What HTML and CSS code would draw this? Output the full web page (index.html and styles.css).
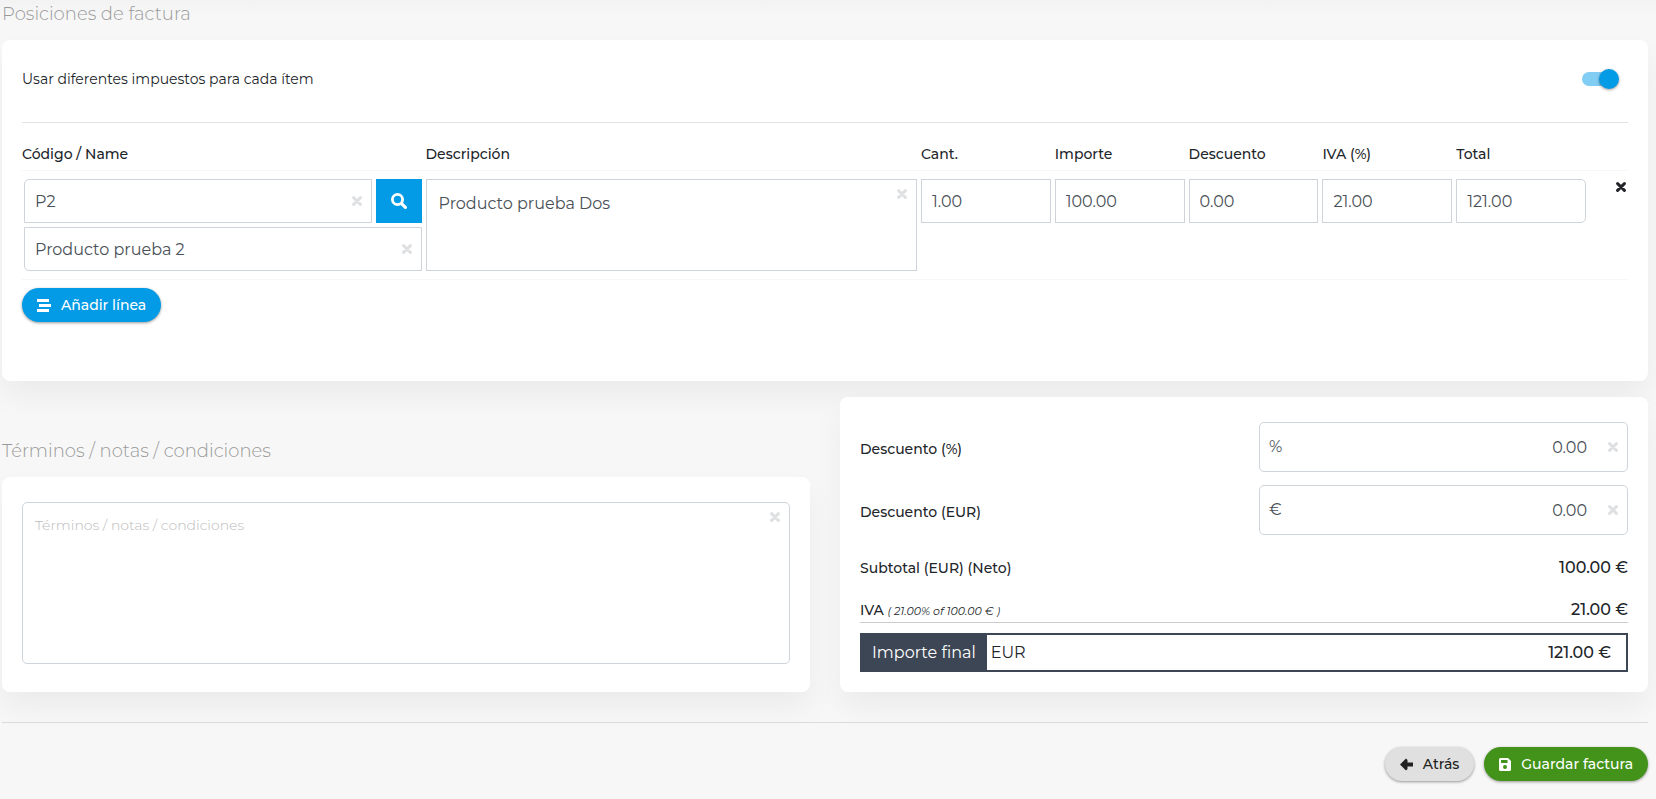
FILE: index.html
```html
<!DOCTYPE html>
<html lang="es">
<head>
<meta charset="utf-8">
<meta name="viewport" content="width=device-width, initial-scale=1">
<title>Posiciones de factura</title>
<link rel="stylesheet" href="styles.css">
</head>
<body>
<svg class="sprite" aria-hidden="true">
  <symbol id="times" viewBox="0 0 10 10"><path d="M1.600 1.600 8.400 8.400M8.400 1.600 1.600 8.400" stroke="currentColor" stroke-width="3" stroke-linecap="round"/></symbol>
</svg>
<main class="page">
  <section>
    <h2 class="section-title">Posiciones de factura</h2>
    <div class="card items-card">
      <div class="tax-row">
        <label for="taxes">Usar diferentes impuestos para cada ítem</label>
        <input class="switch" type="checkbox" role="switch" id="taxes" checked>
      </div>
      <table class="items">
        <colgroup>
          <col class="col-code"><col><col class="col-num"><col class="col-num"><col class="col-num"><col class="col-num"><col class="col-num"><col class="col-remove">
        </colgroup>
        <thead>
          <tr>
            <th scope="col">Código / Name</th><th scope="col">Descripción</th><th scope="col">Cant.</th><th scope="col">Importe</th><th scope="col">Descuento</th><th scope="col">IVA (%)</th><th scope="col">Total</th><td></td>
          </tr>
        </thead>
        <tbody>
          <tr>
            <td>
              <div class="code-cell">
                <div class="code-line">
                  <div class="field">
                    <input class="control round-tl" type="text" aria-label="Código" value="P2">
                    <button class="clear" type="button" aria-label="Borrar código"><svg><use href="#times"/></svg></button>
                  </div>
                  <button class="search" type="button" aria-label="Buscar">
                    <svg viewBox="0 0 16 16"><circle cx="6.5" cy="6.5" r="5.1" fill="none" stroke="currentColor" stroke-width="2.8"/><path d="m10.600 10.600 3.800 3.800" stroke="currentColor" stroke-width="3.2" stroke-linecap="round"/></svg>
                  </button>
                </div>
                <div class="field">
                  <input class="control round-bl" type="text" aria-label="Nombre" value="Producto prueba 2">
                  <button class="clear" type="button" aria-label="Borrar nombre"><svg><use href="#times"/></svg></button>
                </div>
              </div>
            </td>
            <td>
              <div class="field">
                <textarea class="control description" aria-label="Descripción">Producto prueba Dos</textarea>
                <button class="clear clear-top" type="button" aria-label="Borrar descripción"><svg><use href="#times"/></svg></button>
              </div>
            </td>
            <td><input class="control" type="text" aria-label="Cantidad" value="1.00"></td>
            <td><input class="control" type="text" aria-label="Importe" value="100.00"></td>
            <td><input class="control" type="text" aria-label="Descuento" value="0.00"></td>
            <td><input class="control" type="text" aria-label="IVA (%)" value="21.00"></td>
            <td><input class="control round-right" type="text" aria-label="Total" value="121.00"></td>
            <td class="remove-cell"><button class="remove" type="button" aria-label="Eliminar línea"><svg><use href="#times"/></svg></button></td>
          </tr>
        </tbody>
      </table>
      <button class="btn btn-blue" type="button">
        <svg width="14" viewBox="0 0 14 13"><path d="M0 0h12v3H0zM2 5h12v3H2zM0 10h12v3H0z" fill="currentColor"/></svg>
        Añadir línea
      </button>
    </div>
  </section>

  <div class="lower">
    <section class="notes">
      <h2 class="section-title">Términos / notas / condiciones</h2>
      <div class="card notes-card">
        <div class="field">
          <textarea class="control terms" aria-label="Términos / notas / condiciones" placeholder="Términos / notas / condiciones"></textarea>
          <button class="clear clear-top" type="button" aria-label="Borrar notas"><svg><use href="#times"/></svg></button>
        </div>
      </div>
    </section>
    <section class="card totals">
      <div class="discount">
        <label for="disc-pct">Descuento (%)</label>
        <div class="field">
          <span class="unit">%</span>
          <input class="control amount" id="disc-pct" type="text" value="0.00">
          <button class="clear" type="button" aria-label="Borrar descuento (%)"><svg><use href="#times"/></svg></button>
        </div>
      </div>
      <div class="discount">
        <label for="disc-eur">Descuento (EUR)</label>
        <div class="field">
          <span class="unit">€</span>
          <input class="control amount" id="disc-eur" type="text" value="0.00">
          <button class="clear" type="button" aria-label="Borrar descuento (EUR)"><svg><use href="#times"/></svg></button>
        </div>
      </div>
      <div class="sum"><span>Subtotal (EUR) (Neto)</span><span class="value">100.00 €</span></div>
      <div class="sum sum-tax"><span>IVA <em>( 21.00% of 100.00 € )</em></span><span class="value">21.00 €</span></div>
      <div class="final"><span class="final-label">Importe final</span><span class="final-currency">EUR</span><span class="value">121.00 €</span></div>
    </section>
  </div>

  <footer class="actions">
    <button class="btn btn-grey" type="button">
      <svg width="13" viewBox="0 0 13 12"><path d="M6 0 0 6l6 6 1.500-1.500V8H13V4H7.500V1.500z" fill="currentColor"/></svg>
      Atrás
    </button>
    <button class="btn btn-green" type="button">
      <svg width="12" viewBox="0 0 12 13"><path fill-rule="evenodd" d="M1.500 0H9l3 3v8.500a1.500 1.500 0 0 1-1.500 1.500h-9A1.500 1.500 0 0 1 0 11.500v-10A1.500 1.500 0 0 1 1.500 0zM2 2v3h6.500V2zM6 7a2 2 0 1 0 0 4 2 2 0 0 0 0-4z" fill="currentColor"/></svg>
      Guardar factura
    </button>
  </footer>
</main>
</body>
</html>
```
FILE: styles.css
```css
* { box-sizing: border-box; }
body {
  margin: 0;
  background: #f7f7f7 linear-gradient(#f3f3f3, #f7f7f7) no-repeat 0 0 / 100% 20px;
  color: #212529;
  font: 400 14px/20px Montserrat, Inter, sans-serif;
}
.sprite { position: absolute; width: 0; height: 0; }
.page { padding: 0 8px 18px 2px; }
.section-title {
  margin: 0;
  color: #999;
  font-size: 18px;
  font-weight: 300;
  line-height: 28px;
}
.section-title + .card { margin-top: 12px; }
.card {
  background: #fff;
  border-radius: 8px;
  box-shadow: 0 15px 30px rgba(0, 0, 0, .05);
  padding: 20px;
}
.items-card { padding-bottom: 59px; }
.tax-row {
  display: flex;
  align-items: center;
  justify-content: space-between;
  height: 63px;
  padding: 0 9px 24px 0;
  border-bottom: 1px solid #e2e2e2;
  margin-bottom: 14px;
}
.switch {
  appearance: none;
  display: flex;
  width: 37px;
  height: 20px;
  margin: 0;
}
.switch::before {
  content: "";
  flex: 1;
  height: 14px;
  margin: 3px -10px 0 0;
  border-radius: 7px;
  background: #82cdf3;
}
.switch::after {
  content: "";
  width: 20px;
  height: 20px;
  border-radius: 50%;
  background: #039be5;
  box-shadow: 0 1px 3px rgba(0, 0, 0, .4);
}
.items { width: 100%; table-layout: fixed; border-collapse: collapse; }
.col-code { width: 25%; }
.col-num { width: 8.333%; }
.col-remove { width: 40px; }
.items th { padding: 7px 2px 6px; text-align: left; font-weight: 500; }
.items th:first-child { padding-left: 0; }
.items tr { border-bottom: 1px solid #f7f7f7; }
.items tbody td { padding: 8px 2px; vertical-align: top; }
.code-cell { display: grid; gap: 4px; }
.code-line { display: grid; grid-template-columns: 1fr 46px; gap: 4px; }
.field { position: relative; display: flex; }
.control {
  display: block;
  width: 100%;
  height: 44px;
  padding: 0 10px;
  border: 1px solid #ced4da;
  border-radius: 0;
  background: #fff;
  color: #495057;
  font: inherit;
  font-size: 16px;
  font-weight: 400;
  outline: none;
  resize: none;
}
.round-tl { border-top-left-radius: 5px; }
.round-bl { border-bottom-left-radius: 5px; }
.round-right { border-radius: 0 5px 5px 0; }
.description { height: 92px; padding: 14px 12px; }
.clear, .remove, .search { border: 0; padding: 0; background: none; cursor: pointer; }
.clear {
  position: absolute;
  top: 0;
  right: 10px;
  bottom: 0;
  width: 10px;
  color: #dee0e2;
}
.clear svg, .remove svg { display: block; width: 10px; height: 10px; }
.clear-top { bottom: auto; top: 10px; }
.search { background: #039be5; color: #fff; display: grid; place-items: center; }
.search svg { width: 16px; height: 16px; }
.items .remove-cell { padding-top: 6px; text-align: right; }
.remove { color: #212529; }
.btn {
  display: inline-flex;
  align-items: center;
  gap: 10px;
  height: 34px;
  padding: 0 15px;
  border: 0;
  border-radius: 17px;
  font: inherit;
  font-weight: 500;
  box-shadow: 0 1px 3px rgba(0, 0, 0, .4);
  cursor: pointer;
}
.btn svg { height: 13px; }
.btn-blue { margin-top: 8px; background: #039be5; color: #fff; }
.btn-grey { background: #e0e0e0; color: #212121; }
.btn-green { background: #43931a; color: #fff; }
.lower {
  display: grid;
  grid-template-columns: 1fr 1fr;
  gap: 30px;
  margin-top: 16px;
  padding-bottom: 30px;
  border-bottom: 1px solid #dcdcdc;
}
.notes { padding-top: 40px; display: flex; flex-direction: column; }
.notes-card { flex: 1; padding-top: 25px; }
.terms { height: 162px; padding: 12px; border-radius: 5px; font-size: 14px; }
.terms::placeholder { color: #bbb; font-weight: 300; opacity: 1; }
.totals { padding-top: 25px; font-weight: 500; }
.discount {
  display: grid;
  grid-template-columns: 1fr 1fr;
  gap: 30px;
  align-items: center;
  margin-bottom: 13px;
}
.discount label { padding-top: 3px; }
.amount { height: 50px; padding: 0 40px; border-radius: 5px; text-align: right; }
.unit {
  position: absolute;
  left: 10px;
  top: 15px;
  color: #495057;
  font-size: 16px;
  font-weight: 400;
}
.sum { display: flex; justify-content: space-between; padding: 10px 0 1px; margin-bottom: 11px; }
.sum em { font-size: 11px; font-weight: 400; }
.sum-tax { border-bottom: 1px solid #ccc; margin-bottom: 10px; }
.value { font-size: 16px; }
.final {
  display: flex;
  align-items: stretch;
  border: 2px solid #3c4655;
  font-size: 16px;
  line-height: 35px;
}
.final-label { padding: 0 11px 0 10px; background: #3c4655; color: #fff; font-weight: 400; }
.final-currency { flex: 1; padding-left: 4px; font-weight: 400; }
.final .value { padding-right: 15px; }
.actions { display: flex; justify-content: flex-end; gap: 10px; margin-top: 24px; }
```
